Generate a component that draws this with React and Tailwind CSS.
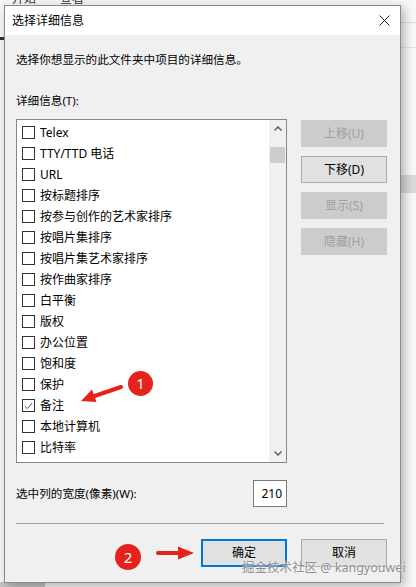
import React from "react";

const items = [
  "Telex",
  "TTY/TTD 电话",
  "URL",
  "按标题排序",
  "按参与创作的艺术家排序",
  "按唱片集排序",
  "按唱片集艺术家排序",
  "按作曲家排序",
  "白平衡",
  "版权",
  "办公位置",
  "饱和度",
  "保护",
  "备注",
  "本地计算机",
  "比特率",
];

const sideButtons = [
  { label: "上移(U)", enabled: false },
  { label: "下移(D)", enabled: true },
  { label: "显示(S)", enabled: false },
  { label: "隐藏(H)", enabled: false },
];

const CheckBox = ({ checked }) => (
  <span className="w-[13px] h-[13px] border border-[#333333] bg-white flex items-center justify-center shrink-0">
    {checked && (
      <svg width="9" height="8" viewBox="0 0 9 8">
        <path d="M0.8 4.2 L3.3 6.6 L8.2 1" fill="none" stroke="#555" strokeWidth="1" />
      </svg>
    )}
  </span>
);

const App = () => {
  return (
    <div className="relative w-[416px] h-[587px] overflow-hidden bg-[#f8f8f8] font-['Noto_Sans','Noto_Sans_CJK_SC',sans-serif] text-black">
      {/* window behind the dialog */}
      <div className="absolute left-[12px] top-[-9px] flex gap-[24px] text-[12px] leading-[16px] text-[#333]">
        <span>开始</span>
        <span>查看</span>
      </div>
      <div className="absolute left-0 top-[37px] w-[4px] h-[3px] bg-[#333]" />
      <div className="absolute right-0 top-[22px] w-[20px] h-[1px] bg-[#dcdcdc]" />
      <div className="absolute right-0 top-[47px] w-[20px] h-[1px] bg-[#e4e4e4]" />
      <div className="absolute right-0 top-[175px] w-[20px] h-[18px] bg-[#dadada]" />
      <div className="absolute left-0 bottom-0 w-[45px] h-[5px] bg-[#c4c4c4]" />

      {/* dialog */}
      <div className="absolute left-[4px] top-[5px] w-[397px] h-[578px] border border-[#8a8a8a] bg-[#f0f0f0] shadow-[3px_3px_10px_rgba(0,0,0,0.3)] flex flex-col">
        <div className="h-[29px] bg-white flex items-center justify-between pl-[7px] pr-[10px] shrink-0">
          <span className="text-[12px] leading-[16px]">选择详细信息</span>
          <svg width="11" height="11" viewBox="0 0 11 11">
            <path d="M0.5 0.5 L10.5 10.5 M10.5 0.5 L0.5 10.5" stroke="#222" strokeWidth="1" />
          </svg>
        </div>

        <div className="flex-1 pl-[11px] text-[11.6px] leading-[16px]">
          <p className="mt-[17px]">选择你想显示的此文件夹中项目的详细信息。</p>
          <p className="mt-[25px]">详细信息(T):</p>

          <div className="mt-[10px] flex gap-[14px]">
            <div className="w-[271px] h-[344px] border border-[#828790] bg-white flex">
              <ul className="flex-1 pt-[2px] pl-[5px]">
                {items.map((item) => (
                  <li key={item} className="h-[21px] flex items-center gap-[5px] text-[12px]">
                    <CheckBox checked={item === "备注"} />
                    <span>{item}</span>
                  </li>
                ))}
              </ul>
              <div className="w-[17px] bg-[#f0f0f0] flex flex-col items-center">
                <div className="h-[17px] flex items-center justify-center">
                  <svg width="8" height="5" viewBox="0 0 8 5">
                    <path d="M0.5 4.5 L4 1 L7.5 4.5" fill="none" stroke="#606060" strokeWidth="1.5" />
                  </svg>
                </div>
                <div className="w-[15px] h-[16px] bg-[#cdcdcd] mt-[10px]" />
                <div className="flex-1" />
                <div className="h-[17px] flex items-center justify-center">
                  <svg width="8" height="5" viewBox="0 0 8 5">
                    <path d="M0.5 0.5 L4 4 L7.5 0.5" fill="none" stroke="#606060" strokeWidth="1.5" />
                  </svg>
                </div>
              </div>
            </div>

            <div className="pt-[1px] flex flex-col gap-[9px]">
              {sideButtons.map((b) => (
                <button
                  key={b.label}
                  className={
                    b.enabled
                      ? "w-[86px] h-[27px] border border-[#adadad] bg-[#e1e1e1] text-[12px] text-black"
                      : "w-[86px] h-[27px] border border-[#cccccc] bg-[#cccccc] text-[12px] text-[#a0a0a0]"
                  }
                >
                  {b.label}
                </button>
              ))}
            </div>
          </div>

          <div className="mt-[17px] w-[271px] flex items-center justify-between">
            <span>选中列的宽度(像素)(W):</span>
            <div className="w-[34px] h-[27px] border border-[#7a7a7a] bg-white flex items-center justify-end pr-[4px] text-[12px]">
              210
            </div>
          </div>

          <div className="mt-[16px] w-[368px] h-[1px] bg-[#a0a0a0]" />

          <div className="mt-[15px] pl-[185px] flex gap-[14px]">
            <button className="w-[86px] h-[28px] border-2 border-[#0078d7] bg-[#e1e1e1] text-[12px]">确定</button>
            <button className="w-[86px] h-[28px] border border-[#adadad] bg-[#e1e1e1] text-[12px]">取消</button>
          </div>
        </div>
      </div>

      {/* annotations */}
      <svg className="absolute inset-0 pointer-events-none" width="416" height="587" viewBox="0 0 416 587">
        <line x1="121" y1="387" x2="93" y2="396.5" stroke="#e5231b" strokeWidth="4" strokeLinecap="round" />
        <polygon points="81,401 96.5,402 92,389.5" fill="#e5231b" />
        <line x1="158" y1="553" x2="180" y2="553" stroke="#e5231b" strokeWidth="4" strokeLinecap="round" />
        <polygon points="194,553 178,546.5 178,559.5" fill="#e5231b" />
      </svg>
      <div className="absolute left-[128px] top-[371px] w-[25px] h-[25px] rounded-full bg-[#e5231b] text-white text-[15px] leading-[25px] text-center">
        1
      </div>
      <div className="absolute left-[115px] top-[544px] w-[26px] h-[26px] rounded-full bg-[#e5231b] text-white text-[15px] leading-[26px] text-center">
        2
      </div>
      <div className="absolute left-[242px] top-[559px] text-[12.5px] leading-[17px] text-[#8e8e8e] [text-shadow:0_0_2px_#ffffff] whitespace-nowrap">
        掘金技术社区 @ kangyouwei
      </div>
    </div>
  );
};

export default App;
